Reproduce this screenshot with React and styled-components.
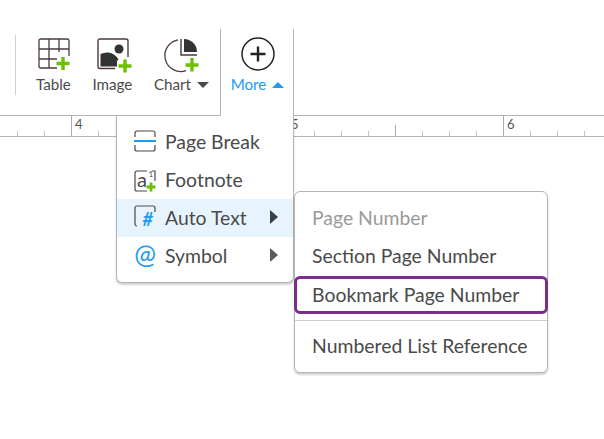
import React from 'react'
import styled, { createGlobalStyle } from 'styled-components';

const GlobalStyle = createGlobalStyle`
html, body {
  margin: 0;
  padding: 0;
  background: #fff;
  overflow: hidden;
}
body {
  font-family: Lato, "Open Sans", sans-serif;
}
`;

const Page = styled.div`
position: relative;
width: 604px;
height: 439px;
padding-top: 29px;
box-sizing: border-box;
overflow: hidden;
`;

const Toolbar = styled.div`
display: flex;
height: 86px;
`;

const LeftGroup = styled.div`
display: flex;
width: 220px;
flex: none;
height: 86px;
border-right: 1px solid #b5b5b5;
`;

const Separator = styled.div`
width: 1px;
height: 60px;
margin: 6px 0 0 15px;
background: #cfcfcf;
`;

const Tools = styled.div`
display: flex;
gap: 21.5px;
margin-left: 20px;
`;

const Tool = styled.div`
display: flex;
flex-direction: column;
align-items: center;
padding-top: 9px;
font-size: 15.2px;
line-height: 17px;
color: ${({ $active }) => ($active ? '#1c9bf0' : '#4a4a4a')};
`;

const MoreTool = styled(Tool)`
position: relative;
z-index: 3;
width: 73px;
height: 87px;
box-sizing: border-box;
padding: 8px 0 0 1px;
background: #fff;
border-right: 1px solid #b5b5b5;
`;

const ToolLabel = styled.div`
display: flex;
align-items: center;
gap: 6px;
margin-top: ${({ $gap }) => $gap}px;
white-space: nowrap;
`;

const ToolSvg = styled.svg`
overflow: visible;
`;

const Caret = styled.span`
width: 0;
height: 0;
border-left: 6px solid transparent;
border-right: 6px solid transparent;
border-top: ${({ $up, $color }) => ($up ? 'none' : `6px solid ${$color}`)};
border-bottom: ${({ $up, $color }) => ($up ? `6px solid ${$color}` : 'none')};
`;

const Ruler = styled.div`
display: flex;
align-items: flex-end;
height: 20px;
padding-left: 17px;
border-top: 1px solid #b5b5b5;
border-bottom: 1px solid #b5b5b5;
`;

const Tick = styled.div`
position: relative;
flex: none;
width: 27px;
height: ${({ $size }) => $size}px;
box-sizing: border-box;
border-left: 1px solid #c4c4c4;
border-color: ${({ $size }) => ($size > 6 ? '#aaa' : '#c4c4c4')};
`;

const TickLabel = styled.span`
position: absolute;
left: 3px;
top: 1px;
font-size: 13px;
line-height: 15px;
color: #555;
`;

const Menu = styled.div`
position: absolute;
z-index: 2;
left: 116px;
top: 116px;
width: 178px;
height: 167px;
box-sizing: border-box;
padding-top: 7px;
background: #fff;
border: 1px solid #b5b5b5;
border-top: none;
border-radius: 0 0 6px 6px;
box-shadow: 0 2px 2px rgba(0, 0, 0, 0.18);
`;

const SubMenu = styled.div`
position: absolute;
z-index: 4;
left: 294px;
top: 191px;
width: 254px;
height: 182px;
box-sizing: border-box;
padding-top: 7px;
background: #fff;
border: 1px solid #b5b5b5;
border-radius: 6px;
box-shadow: 0 2px 2px rgba(0, 0, 0, 0.18);
`;

const MenuItem = styled.div`
display: flex;
align-items: center;
height: 38px;
box-sizing: border-box;
padding: 0 0 2px 18px;
font-size: 19.4px;
color: #4a4a4a;
background: ${({ $active }) => ($active ? '#e8f4fd' : 'transparent')};
`;

const ItemIcon = styled.span`
display: flex;
justify-content: center;
width: 22px;
margin: 0 9px 0 -1px;
`;

const SymbolGlyph = styled.span`
padding-bottom: 3px;
color: #1c9bf0;
font-size: 26px;
line-height: 26px;
`;

const ItemArrow = styled.span`
position: absolute;
left: 153px;
width: 0;
height: 0;
border-top: 7px solid transparent;
border-bottom: 7px solid transparent;
border-left: 8px solid ${({ $color }) => $color};
`;

const SubItem = styled.div`
display: flex;
align-items: center;
height: 38px;
box-sizing: border-box;
padding: 0 0 2px ${({ $selected }) => ($selected ? '15px' : '17px')};
margin: ${({ $selected }) => ($selected ? '1px -1px 0' : '0')};
font-size: 19.4px;
white-space: nowrap;
color: ${({ $disabled }) => ($disabled ? '#9a9a9a' : '#4a4a4a')};
border: ${({ $selected }) => ($selected ? '3px solid #7b2d8e' : 'none')};
border-radius: 6px;
`;

const Divider = styled.div`
height: 1px;
margin: 6px 0;
background: #cfcfcf;
`;

const TableIcon = () => (
  <ToolSvg width="34" height="34" viewBox="-1 0 34 34" fill="none">
    <path d="M2 20V3a2 2 0 0 1 2-2h26a2 2 0 0 1 2 2v15M2 20v8a2 2 0 0 0 2 2h16M2 11h30M2 21h18M12 1v29M22 1v13" stroke="#4b3b3f" strokeWidth="1.3" />
    <path d="M26 19v13M19.500 25.500h13" stroke="#6cc000" strokeWidth="3.4" />
  </ToolSvg>
);

const ImageIcon = () => (
  <ToolSvg width="36" height="36" viewBox="-2 0 36 36" fill="none">
    <path d="M19 30.500H4a2 2 0 0 1-2-2V3a2 2 0 0 1 2-2h26a2 2 0 0 1 2 2v16" stroke="#4b3b3f" strokeWidth="1.4" />
    <circle cx="23" cy="11" r="4.5" fill="#333" />
    <path d="M4.500 16q4-1.800 8-1.500 6.500 1 10 7l-1.500 1.500v5.500H4.500z" fill="#333" />
    <path d="M29 21.500v13M22.500 28h13" stroke="#6cc000" strokeWidth="3.4" />
  </ToolSvg>
);

const ChartIcon = () => (
  <ToolSvg width="34" height="34" viewBox="-1 0 34 34" fill="none">
    <path d="M13 1.800A16 16 0 1 0 21 32.700" stroke="#4b3b3f" strokeWidth="1.3" />
    <path d="M16 1v16h16" stroke="#4b3b3f" strokeWidth="1.4" />
    <path d="M19 1a13 13 0 0 1 13 13H19z" fill="#333" />
    <path d="M27 20v13.500M20.500 27h13" stroke="#6cc000" strokeWidth="3.4" />
  </ToolSvg>
);

const MoreIcon = () => (
  <svg width="34" height="34" viewBox="0 0 34 34" fill="none">
    <circle cx="17" cy="17" r="16" stroke="#222" strokeWidth="1.5" />
    <path d="M17 9.500v15M9.500 17h15" stroke="#222" strokeWidth="2.4" />
  </svg>
);

const PageBreakIcon = () => (
  <svg width="22" height="22" viewBox="0 0 22 22" fill="none">
    <path d="M1 7V3a2 2 0 0 1 2-2h16a2 2 0 0 1 2 2v4M1 15v4a2 2 0 0 0 2 2h16a2 2 0 0 0 2-2v-4" stroke="#4a4a4a" strokeWidth="1.2" />
    <path d="M0 11h22" stroke="#1c9bf0" strokeWidth="2" />
  </svg>
);

const FootnoteIcon = () => (
  <svg width="22" height="34" viewBox="0 -8 22 34" fill="none">
    <path d="M13 1H3a2 2 0 0 0-2 2v16a2 2 0 0 0 2 2h10M18 1h3v10" stroke="#4a4a4a" strokeWidth="1.2" />
    <text x="3" y="16.500" fontFamily="Lato" fontSize="20" fill="#4a4a4a">a</text>
    <text x="14.500" y="7" fontFamily="Lato" fontSize="8" fill="#4a4a4a">1</text>
    <path d="M17 12.500v9M12.500 17h9" stroke="#6cc000" strokeWidth="2.800" />
  </svg>
);

const AutoTextIcon = () => (
  <svg width="22" height="28" viewBox="0 0 22 28" fill="none">
    <path d="M3 23a2 2 0 0 1-2-2V5a2 2 0 0 1 2-2h16a2 2 0 0 1 2 2v4" stroke="#4a4a4a" strokeWidth="1.2" />
    <text x="8.500" y="23" fontFamily="Lato" fontWeight="700" fontStyle="italic" fontSize="18" fill="#1c9bf0">#</text>
  </svg>
);

const ticks = [];
for (let i = 0; i < 22; i++) {
  const major = i % 8 === 2;
  const half = i % 8 === 6;
  ticks.push({ size: major ? 20 : half ? 11 : 5, label: major ? 4 + (i - 2) / 8 : null });
}

const App = () => {
  return (
    <Page>
      <GlobalStyle />
      <Toolbar>
        <LeftGroup>
          <Separator />
          <Tools>
            <Tool>
              <TableIcon />
              <ToolLabel $gap={4}>Table</ToolLabel>
            </Tool>
            <Tool>
              <ImageIcon />
              <ToolLabel $gap={2}>Image</ToolLabel>
            </Tool>
            <Tool>
              <ChartIcon />
              <ToolLabel $gap={4}>
                Chart
                <Caret $color="#4a4a4a" />
              </ToolLabel>
            </Tool>
          </Tools>
        </LeftGroup>
        <MoreTool $active>
          <MoreIcon />
          <ToolLabel $gap={5}>
            More
            <Caret $up $color="#1c9bf0" />
          </ToolLabel>
        </MoreTool>
      </Toolbar>
      <Ruler>
        {ticks.map((t, i) => (
          <Tick key={i} $size={t.size}>
            {t.label && <TickLabel>{t.label}</TickLabel>}
          </Tick>
        ))}
      </Ruler>
      <Menu>
        <MenuItem>
          <ItemIcon><PageBreakIcon /></ItemIcon>
          Page Break
        </MenuItem>
        <MenuItem>
          <ItemIcon><FootnoteIcon /></ItemIcon>
          Footnote
        </MenuItem>
        <MenuItem $active>
          <ItemIcon><AutoTextIcon /></ItemIcon>
          Auto Text
          <ItemArrow $color="#3a3f4a" />
        </MenuItem>
        <MenuItem>
          <ItemIcon><SymbolGlyph>@</SymbolGlyph></ItemIcon>
          Symbol
          <ItemArrow $color="#5a5a5a" />
        </MenuItem>
      </Menu>
      <SubMenu>
        <SubItem $disabled>Page Number</SubItem>
        <SubItem>Section Page Number</SubItem>
        <SubItem $selected>Bookmark Page Number</SubItem>
        <Divider />
        <SubItem>Numbered List Reference</SubItem>
      </SubMenu>
    </Page>
  );
};

export default App;
